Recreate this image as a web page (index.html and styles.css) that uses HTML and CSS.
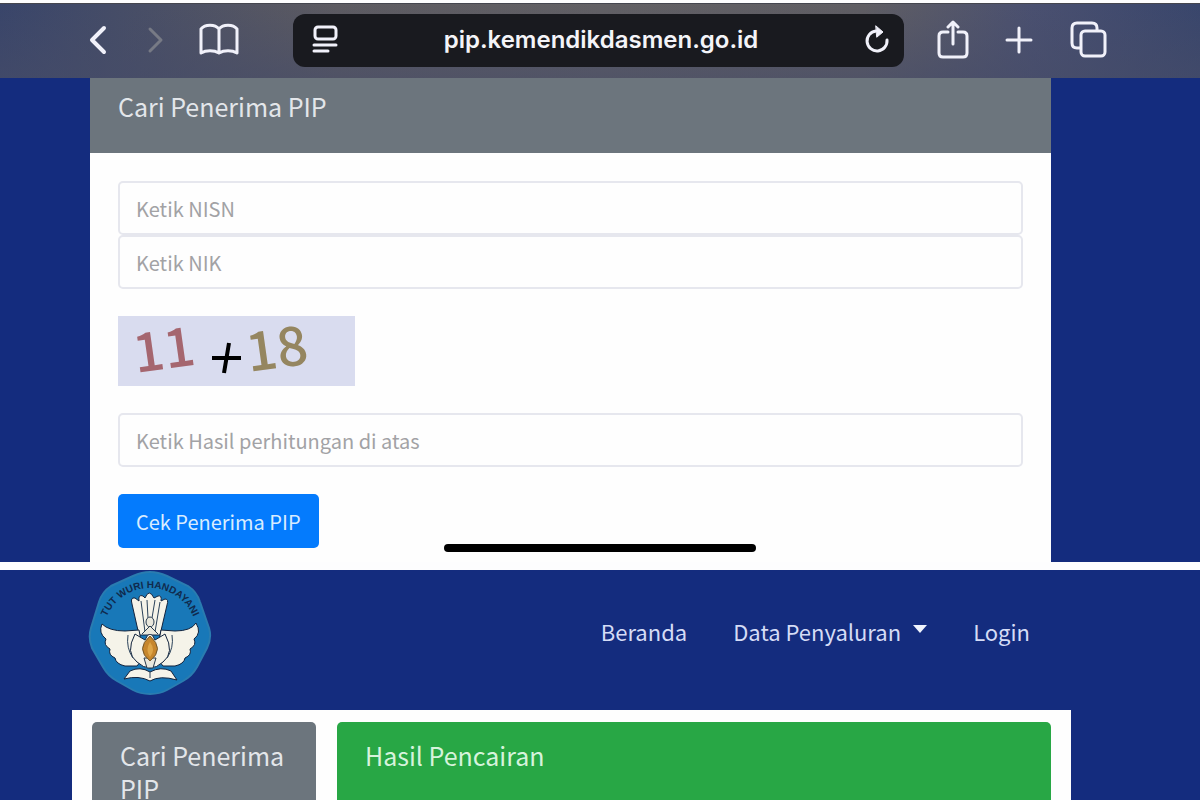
FILE: index.html
```
<!DOCTYPE html>
<html lang="id">
<head>
    <meta charset="UTF-8" />
    <meta name="viewport" content="width=device-width, initial-scale=1.0" />
    <title>Cari Penerima PIP</title>
    <link rel="stylesheet" href="styles.css">
</head>
<body>
    <section class="screen screen-search">
        <div class="toolbar">
            <button type="button" class="tool back" aria-label="Kembali">
                <svg width="20" height="32" viewBox="0 0 20 32"><path d="M16 4 L4 16 L16 28" /></svg>
            </button>
            <button type="button" class="tool forward" aria-label="Maju">
                <svg width="20" height="32" viewBox="0 0 20 32"><path d="M4 5 L15 16 L4 27" /></svg>
            </button>
            <button type="button" class="tool book" aria-label="Markah">
                <svg width="40" height="34" viewBox="0 0 40 34"><path d="M20 6 C16 1 6 1 2 6 V30 C7 27 15 27 20 30 C25 27 33 27 38 30 V6 C34 1 24 1 20 6 V30" /></svg>
            </button>
            <div class="address">
                <svg class="reader" width="26" height="30" viewBox="0 0 26 30"><rect x="3" y="2" width="21" height="12" rx="3" /><path d="M2 20 H24 M2 26 H16" /></svg>
                <span class="url">pip.kemendikdasmen.go.id</span>
                <button type="button" class="tool reload" aria-label="Muat ulang">
                    <svg width="26" height="30" viewBox="0 0 26 30"><path d="M12 6 A10 10 0 1 0 23 15" /><path class="solid" d="M12 1 L19 7 L13 12 Z" /></svg>
                </button>
            </div>
            <button type="button" class="tool share" aria-label="Bagikan">
                <svg width="32" height="40" viewBox="0 0 32 40"><path d="M11 12 H6 Q2 12 2 16 V33 Q2 37 6 37 H26 Q30 37 30 33 V16 Q30 12 26 12 H21 M16 24 V3 M11 7 L16 2 L21 7" /></svg>
            </button>
            <button type="button" class="tool plus" aria-label="Tab baru">
                <svg width="28" height="28" viewBox="0 0 28 28"><path d="M14 2 V26 M2 14 H26" /></svg>
            </button>
            <button type="button" class="tool tabs" aria-label="Semua tab">
                <svg width="38" height="38" viewBox="0 0 38 38"><rect x="11" y="10" width="24" height="25" rx="4" /><path d="M10 27 H7 Q2 27 2 22 V7 Q2 2 7 2 H22 Q27 2 27 7 V9" /></svg>
            </button>
        </div>

        <div class="search-card">
            <h2 class="card-header">Cari Penerima PIP</h2>
            <form class="search-form">
                <input type="text" class="field" placeholder="Ketik NISN" aria-label="NISN" />
                <input type="text" class="field" placeholder="Ketik NIK" aria-label="NIK" />
                <svg class="captcha" width="237" height="70" viewBox="0 0 237 70" role="img" aria-label="11 + 18">
                    <text x="18" y="57" transform="rotate(-8 18 57)" fill="#a5666f">11</text>
                    <path d="M94 42 H123 M111 27 L106 57" stroke="#000" stroke-width="4" />
                    <text x="131" y="56" transform="rotate(-8 131 56)" fill="#958660">18</text>
                </svg>
                <input type="text" class="field" placeholder="Ketik Hasil perhitungan di atas" aria-label="Hasil perhitungan" />
                <button type="button" class="btn-check">Cek Penerima PIP</button>
            </form>
        </div>
        <div class="home-bar"></div>
    </section>

    <section class="screen-result">
        <div class="site-header">
            <svg class="logo" width="126" height="126" viewBox="0 0 126 126" role="img" aria-label="Tut Wuri Handayani">
                <defs><path id="arc" d="M16 65 A47 47 0 0 1 110 65" /></defs>
                <path d="M63 2 Q71 2 80 6 L101 16 Q110 22 113 32 L122 58 Q125 68 120 78 L110 97 Q105 106 96 111 L80 120 Q73 124 63 124 Q53 124 46 120 L30 111 Q21 106 16 97 L5 78 Q1 68 4 58 L12 32 Q15 22 24 16 L46 6 Q55 2 63 2 Z" fill="#1878b8" stroke="#2a7cb0" stroke-width="2" />
                <text class="motto"><textPath href="#arc" startOffset="50%" text-anchor="middle">TUT WURI HANDAYANI</textPath></text>
                <g fill="#f5f3e9" stroke="#12233d" stroke-width="1">
                    <path d="M52 65 L45 34 Q43 27 48 28 L52 31 Q51 24 56 26 L58 28 Q62 18 67 28 L71 26 Q75 25 74 31 L78 29 Q82 29 80 35 L73 65 Z" />
                    <path d="M52 60 L38 61 Q22 61 15 54 Q11 63 19 69 Q16 75 23 79 Q21 85 28 88 Q29 94 38 96 H50 L57 87 Z" />
                    <path d="M74 60 L88 61 Q104 61 109 53 Q115 63 107 69 Q110 75 103 79 Q105 85 98 88 Q97 94 88 96 H76 L69 87 Z" />
                    <path d="M48 64 Q38 83 50 92 Q63 104 76 92 Q88 83 78 64 L68 70 Q63 58 58 70 Z" />
                    <path d="M37 109 L43 101 Q53 96 63 102 Q74 96 84 101 L90 110 Q73 105 63 111 Q52 105 37 109 Z" />
                </g>
                <path d="M54 31 L58 62 M60 30 L61 48 M68 30 L65 48 M73 32 L68 62 M41 65 Q39 78 46 88 M85 65 Q87 78 80 88 M63 102 V108" fill="none" stroke="#2a4159" stroke-width="1" />
                <ellipse cx="63" cy="52" rx="4" ry="5" fill="#e9e7dc" stroke="#26394d" />
                <path d="M55 64 L63 56 L71 64 M57 88 L69 88 L66 98 H60 Z" fill="#e9e7dc" stroke="#26394d" />
                <path d="M63 66 Q78 79 63 91 Q48 79 63 66 Z" fill="#c7862c" stroke="#71572e" />
                <path d="M63 72 Q69 80 63 87 Q58 80 63 72 Z" fill="#dea547" />
            </svg>
            <nav class="menu">
                <a href="#">Beranda</a>
                <button type="button" class="dropdown">Data Penyaluran <span class="caret"></span></button>
                <a href="#">Login</a>
            </nav>
        </div>
        <main class="results">
            <h2 class="result-head search-head">Cari Penerima PIP</h2>
            <h2 class="result-head payout-head">Hasil Pencairan</h2>
        </main>
    </section>
</body>
</html>
```
FILE: styles.css
```
* {
    box-sizing: border-box;
    margin: 0;
}
body {
    display: flex;
    flex-direction: column;
    min-height: 100vh;
    padding-top: 3px;
    background: #fdfdfe;
    font-family: "Noto Sans CJK SC", "Noto Sans", sans-serif;
}
button, input {
    font-family: inherit;
}
.screen, .screen-result {
    background: #142c7e;
}
.screen {
    position: relative;
    flex: none;
}
.screen-result {
    flex: 1;
    display: flex;
    flex-direction: column;
    margin-top: 8px;
}

/* browser toolbar */
.toolbar {
    display: flex;
    align-items: center;
    height: 75px;
    padding: 0 92px 2px 88px;
    background: linear-gradient(rgba(70, 75, 100, 0), rgba(70, 76, 104, 0.6)), linear-gradient(90deg, #39456a, #5d5b61 28%, #626064 50%, #605e63 72%, #4a5070 86%, #39466c);
    border-top: 1px solid #45464f;
}
.tool {
    display: flex;
    padding: 0;
    border: none;
    background: none;
}
.toolbar svg {
    fill: none;
    stroke: #f1f1fa;
    stroke-width: 3;
    stroke-linecap: round;
    stroke-linejoin: round;
}
.toolbar .back svg {
    stroke-width: 4;
}
.toolbar .forward svg {
    stroke: #777a85;
}
.toolbar .solid {
    fill: #f1f1fa;
    stroke-width: 1;
}
.forward {
    margin-left: 38px;
}
.book {
    margin-left: 33px;
}
.address {
    flex: 1;
    display: flex;
    align-items: center;
    height: 53px;
    margin: 0 33px 0 54px;
    padding: 0 14px 0 19px;
    border-radius: 12px;
    background: #191a1f;
}
.url {
    flex: 1;
    color: #f4f4f8;
    font: 600 24px/32px Inter, sans-serif;
    text-align: center;
}
.plus {
    margin: 0 37px 0 36px;
}

/* search form */
.search-card {
    margin: 0 149px 0 90px;
    background: #fefefe;
}
.card-header {
    height: 75px;
    padding: 12px 28px;
    color: #e3e6ea;
    background: #6c757d;
    font-size: 25px;
    font-weight: 400;
    line-height: 33px;
}
.search-form {
    display: flex;
    flex-direction: column;
    align-items: flex-start;
    padding: 28px 28px 14px;
}
.field {
    width: 100%;
    height: 54px;
    padding: 0 16px;
    border: 2px solid #e6e7ee;
    border-radius: 5px;
    background: #fefefe;
    font-size: 20px;
}
.field::placeholder {
    color: #a2a2a5;
}
.captcha {
    margin: 27px 0;
    background: #d9dcef;
    font-size: 54px;
    font-weight: 500;
}
.btn-check {
    height: 54px;
    margin-top: 27px;
    padding: 0 18px;
    border: none;
    border-radius: 5px;
    color: #d9ecff;
    background: #047bfd;
    font-size: 20px;
}
.home-bar {
    position: absolute;
    bottom: 10px;
    left: 37%;
    width: 26%;
    height: 8px;
    border-radius: 4px;
    background: #000;
}

/* result page */
.site-header {
    display: flex;
    align-items: center;
    justify-content: space-between;
    padding: 0 170px 14px 87px;
}
.motto {
    fill: #102a4d;
    font: 700 10px "Liberation Sans", sans-serif;
}
.menu {
    display: flex;
    gap: 46px;
    margin-bottom: 4px;
}
.menu a, .dropdown {
    padding: 0;
    border: none;
    color: #d5dcf6;
    background: none;
    font-size: 22px;
    line-height: 32px;
    text-decoration: none;
}
.dropdown {
    display: flex;
    align-items: center;
    gap: 12px;
}
.caret {
    margin-bottom: 4px;
    border: 7px solid transparent;
    border-top: 8px solid #f0f4fd;
    border-bottom: none;
}
.results {
    flex: 1;
    display: grid;
    grid-template-columns: 224px 1fr;
    gap: 21px;
    margin: 0 129px 0 72px;
    padding: 12px 20px 0;
    background: #fefefe;
}
.result-head {
    padding: 17px 28px;
    border-radius: 5px 5px 0 0;
    color: #e3e6ea;
    font-size: 25px;
    font-weight: 400;
    line-height: 33px;
}
.search-head {
    background: #6c757d;
}
.payout-head {
    color: #d6f3dc;
    background: #28a745;
}
```
